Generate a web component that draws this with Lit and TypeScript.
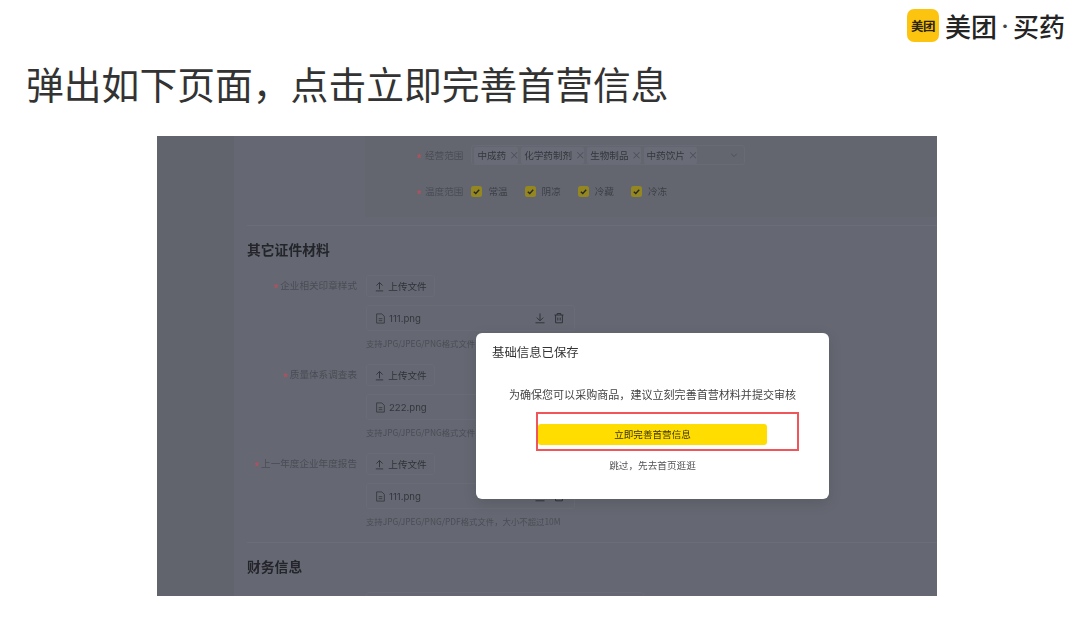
import { LitElement, html, css, svg } from "lit";
import { customElement } from "lit/decorators.js";

const uploadIcon = svg`<svg class="ic" viewBox="0 0 12 12" width="11" height="11" fill="none" stroke="#303238" stroke-width="1"><path d="M2 10.8h8M6 9V1.8M2.6 5 6 1.6 9.4 5"/></svg>`;
const fileIcon = svg`<svg class="ic" viewBox="0 0 12 12" width="11" height="11" fill="none" stroke="#34363c" stroke-width="0.9"><path d="M1.8 1h5.6l2.8 2.6V11H1.8zM4 6.2h4M4 8.4h4"/></svg>`;
const downIcon = svg`<svg viewBox="0 0 12 12" width="12" height="12" fill="none" stroke="#303238" stroke-width="1"><path d="M1.5 10.8h9M6 8.6V1.5M2.8 5.6 6 8.8l3.2-3.2"/></svg>`;
const trashIcon = svg`<svg viewBox="0 0 12 12" width="12" height="12" fill="none" stroke="#303238" stroke-width="1"><path d="M1.5 3h9M4.2 3V1.5h3.6V3M2.6 3v7.8h6.8V3M4.8 5.5v3M7.2 5.5v3"/></svg>`;
const chevron = svg`<svg viewBox="0 0 10 10" width="8" height="8" fill="none" stroke="#474a52" stroke-width="1"><path d="M1.5 3.5 5 7l3.5-3.5"/></svg>`;
const check = svg`<svg viewBox="0 0 10 10" width="9" height="9" fill="none" stroke="#26272b" stroke-width="1.5"><path d="M2 5.2 4.2 7.3 8 3"/></svg>`;

@customElement("app-root")
export class AppRoot extends LitElement {
  static styles = css`
    :host {
      display: block;
      width: 1080px;
      height: 619px;
      background: #fff;
      overflow: hidden;
      font-family: "Noto Sans CJK SC", "Noto Sans", sans-serif;
    }
    .brand {
      height: 52px;
      display: flex;
      justify-content: flex-end;
      align-items: center;
      padding-right: 15px;
      padding-bottom: 2px;
      box-sizing: border-box;
      gap: 6px;
    }
    .logo {
      width: 32px;
      height: 33px;
      border-radius: 7px;
      background: #fdc40f;
      color: #2a2410;
      font-size: 12.5px;
      font-weight: 700;
      display: flex;
      align-items: center;
      justify-content: center;
      white-space: nowrap;
      letter-spacing: -0.5px;
    }
    .brand-name {
      display: flex;
      font-size: 26px;
      line-height: 33px;
      font-weight: 500;
      color: #242424;
      white-space: nowrap;
    }
    .brand-dot {
      width: 16px;
      text-align: center;
      font-size: 14px;
      font-weight: 700;
      color: #444;
    }
    .headline {
      margin: 0 0 0 26px;
      height: 84px;
      padding-top: 4px;
      box-sizing: border-box;
      font-size: 37.8px;
      line-height: 54px;
      font-weight: 400;
      color: #333;
      white-space: nowrap;
    }
    .shot {
      position: relative;
      margin-left: 157px;
      width: 780px;
      height: 460px;
      overflow: hidden;
      display: flex;
      background: #63666f;
    }
    .blurred {
      display: flex;
      width: 100%;
      height: 100%;
      filter: blur(0.45px);
    }
    .side {
      width: 77px;
      flex: none;
      background: #61646d;
    }
    .main {
      flex: 1;
      min-width: 0;
      background: #656872;
      padding: 9px 0 0 13px;
      box-sizing: border-box;
    }
    .panel {
      margin-left: 118px;
      height: 89px;
      margin-top: -9px;
      padding-top: 9px;
      box-sizing: border-box;
    }
    .panel-fill {
      background: #63666f;
      height: 81px;
      display: flex;
      flex-direction: column;
      gap: 16px;
      margin-top: -9px;
      padding-top: 9px;
      box-sizing: border-box;
      border-radius: 0 0 4px 4px;
    }
    .prow {
      display: flex;
      align-items: center;
      gap: 8px;
      padding-left: 52px;
      height: 20px;
    }
    .lab {
      font-size: 9.6px;
      line-height: 20px;
      color: #4a4d55;
      white-space: nowrap;
    }
    .lab i {
      display: inline-block;
      width: 6px;
      margin-right: 2px;
      font-family: "Liberation Sans", sans-serif;
      font-style: normal;
      font-weight: 700;
      font-size: 11px;
      line-height: 1;
      vertical-align: -3px;
      color: #b5505c;
    }
    .select {
      width: 274px;
      height: 20px;
      box-sizing: border-box;
      border: 1px solid #686b75;
      border-radius: 3px;
      display: flex;
      align-items: center;
      gap: 3px;
      padding: 0 6px 0 2px;
    }
    .tag {
      height: 17px;
      background: #696c76;
      border-radius: 2px;
      padding: 0 3px;
      display: flex;
      align-items: center;
      gap: 3px;
      font-size: 9.6px;
      color: #34363c;
      white-space: nowrap;
    }
    .tag span {
      width: 6px;
      text-align: center;
      color: #4a4d55;
      font-size: 10px;
      line-height: 1;
    }
    .chev {
      margin-left: auto;
      display: flex;
    }
    .opts {
      display: flex;
      gap: 17px;
    }
    .opt {
      display: flex;
      align-items: center;
      gap: 6px;
      font-size: 9.6px;
      color: #3e4047;
    }
    .box {
      width: 11px;
      height: 11px;
      background: #94871f;
      border-radius: 2.5px;
      display: flex;
      align-items: center;
      justify-content: center;
    }
    .rule {
      height: 1px;
      background: #6b6e78;
    }
    .sect {
      font-size: 13.8px;
      font-weight: 700;
      color: #24252a;
      line-height: 20px;
      margin: 13px 0 16px;
    }
    .fld {
      display: grid;
      grid-template-columns: 110px 1fr;
      column-gap: 9px;
      height: 89px;
      align-content: start;
    }
    .fld .lab {
      text-align: right;
      height: 21px;
      line-height: 21px;
    }
    .ctrl {
      display: flex;
      flex-direction: column;
      align-items: flex-start;
    }
    .up {
      height: 22px;
      width: 69px;
      box-sizing: border-box;
      border: 1px solid #696c76;
      border-radius: 3px;
      display: flex;
      align-items: center;
      justify-content: center;
      gap: 3px;
      font-size: 9.6px;
      color: #303238;
    }
    .ic {
      flex: none;
    }
    .file {
      margin-top: 8px;
      width: 209px;
      height: 26px;
      box-sizing: border-box;
      border: 1px solid #696c76;
      border-radius: 3px;
      display: flex;
      align-items: center;
      padding: 0 9px 0 8px;
      gap: 3px;
      font-family: "Inter", "Noto Sans", sans-serif;
      font-size: 9.6px;
      color: #34363c;
    }
    .acts {
      margin-left: auto;
      display: flex;
      gap: 7px;
    }
    .hint {
      margin-top: 5px;
      font-size: 8.4px;
      line-height: 14px;
      color: #4a4d55;
      white-space: nowrap;
    }
    .stub {
      margin-left: 119px;
      width: 276px;
      height: 20px;
      border: 1px solid #696c76;
      border-radius: 3px;
    }
    .sect.fin {
      margin-bottom: 16px;
    }
    .dialog {
      position: absolute;
      left: 319px;
      top: 197px;
      width: 353px;
      height: 166px;
      box-sizing: border-box;
      background: #fff;
      border-radius: 6px;
      box-shadow: 0 4px 14px rgba(0, 0, 0, 0.12);
      padding: 10px 16px 0;
      display: flex;
      flex-direction: column;
      filter: blur(0.25px);
    }
    .dtitle {
      font-size: 12.4px;
      line-height: 18px;
      color: #333;
    }
    .dbody {
      margin-top: 24px;
      text-align: center;
      font-size: 11.05px;
      line-height: 18px;
      color: #444;
      white-space: nowrap;
    }
    .cta {
      position: relative;
      margin: 21px 0 0 46px;
      width: 229px;
      height: 21px;
      border-radius: 3px;
      background: #ffdd00;
      font-size: 9.6px;
      line-height: 21px;
      text-align: center;
      color: #3a3410;
    }
    .mark {
      position: absolute;
      left: -2px;
      top: -12px;
      width: 263px;
      height: 39px;
      box-sizing: border-box;
      border: 2px solid #f0555a;
    }
    .skip {
      margin-top: 11px;
      text-align: center;
      font-size: 9.65px;
      line-height: 18px;
      color: #555;
    }
  `;

  private field(label: string, file: string, hint: string) {
    return html`<div class="fld">
      <div class="lab"><i>*</i>${label}</div>
      <div class="ctrl">
        <div class="up">${uploadIcon}上传文件</div>
        <div class="file">
          ${fileIcon}<span>${file}</span>
          <div class="acts">${downIcon}${trashIcon}</div>
        </div>
        <div class="hint">${hint}</div>
      </div>
    </div>`;
  }

  render() {
    const tags = ["中成药", "化学药制剂", "生物制品", "中药饮片"];
    const temps = ["常温", "阴凉", "冷藏", "冷冻"];
    return html`
      <div class="brand">
        <div class="logo">美团</div>
        <div class="brand-name">美团<span class="brand-dot">·</span>买药</div>
      </div>
      <h1 class="headline">弹出如下页面，点击立即完善首营信息</h1>
      <div class="shot">
        <div class="blurred">
          <div class="side"></div>
          <div class="main">
            <div class="panel">
              <div class="panel-fill">
                <div class="prow">
                  <div class="lab"><i>*</i>经营范围</div>
                  <div class="select">
                    ${tags.map((t) => html`<div class="tag">${t}<span>×</span></div>`)}
                    <div class="chev">${chevron}</div>
                  </div>
                </div>
                <div class="prow">
                  <div class="lab"><i>*</i>温度范围</div>
                  <div class="opts">
                    ${temps.map((t) => html`<div class="opt"><div class="box">${check}</div>${t}</div>`)}
                  </div>
                </div>
              </div>
            </div>
            <div class="rule"></div>
            <div class="sect">其它证件材料</div>
            ${this.field("企业相关印章样式", "111.png", "支持JPG/JPEG/PNG格式文件，大小不超过10M")}
            ${this.field("质量体系调查表", "222.png", "支持JPG/JPEG/PNG格式文件，大小不超过10M")}
            ${this.field("上一年度企业年度报告", "111.png", "支持JPG/JPEG/PNG/PDF格式文件，大小不超过10M")}
            <div class="rule"></div>
            <div class="sect fin">财务信息</div>
            <div class="stub"></div>
          </div>
        </div>
        <div class="dialog">
          <div class="dtitle">基础信息已保存</div>
          <div class="dbody">为确保您可以采购商品，建议立刻完善首营材料并提交审核</div>
          <div class="cta">立即完善首营信息<div class="mark"></div></div>
          <div class="skip">跳过，先去首页逛逛</div>
        </div>
      </div>
    `;
  }
}
